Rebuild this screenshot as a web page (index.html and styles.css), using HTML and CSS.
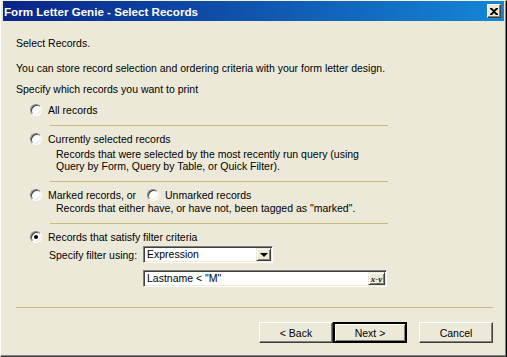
FILE: index.html
```html
<!DOCTYPE html>
<html lang="en">
<head>
  <meta charset="UTF-8" />
  <title>Form Letter Genie - Select Records</title>
  <link rel="stylesheet" href="styles.css">
</head>
<body>
  <div class="window">
    <div class="titlebar">
      <span class="title">Form Letter Genie - Select Records</span>
      <span class="close" title="Close">
        <svg width="8" height="7" viewBox="0 0 8 7"><path d="M0 0h2l2 2 2-2h2v1L5 3.5 8 6v1H6L4 5 2 7H0V6l3-2.5L0 1z" fill="#000"/></svg>
      </span>
    </div>

    <main class="content">
      <p class="line heading">Select Records.</p>
      <p class="line">You can store record selection and ordering criteria with your form letter design.</p>
      <p class="line">Specify which records you want to print</p>

      <div class="opt"><span class="radio"></span><span>All records</span></div>
      <div class="sep"></div>

      <div class="opt"><span class="radio"></span><span>Currently selected records</span></div>
      <p class="desc first">Records that were selected by the most recently run query (using<br>Query by Form, Query by Table, or Quick Filter).</p>
      <div class="sep"></div>

      <div class="opt">
        <span class="radio"></span><span class="pair-label">Marked records, or</span>
        <span class="radio"></span><span>Unmarked records</span>
      </div>
      <p class="desc">Records that either have, or have not, been tagged as "marked".</p>
      <div class="sep"></div>

      <div class="opt"><span class="radio on"></span><span>Records that satisfy filter criteria</span></div>
      <div class="filter-row">
        <span class="filter-label">Specify filter using:</span>
        <div class="select">
          <span class="value">Expression</span>
          <span class="arrow"><span class="tri"></span></span>
        </div>
      </div>
      <div class="field">
        <span class="value">Lastname &lt; "M"</span>
        <span class="xy">x-y</span>
      </div>
    </main>

    <footer class="footer">
      <div class="footer-sep"></div>
      <div class="buttons">
        <button class="btn">&lt; Back</button>
        <button class="btn default">Next &gt;</button>
        <button class="btn cancel">Cancel</button>
      </div>
    </footer>
  </div>
</body>
</html>
```

FILE: styles.css
```css
* {
  box-sizing: border-box;
}
body {
  margin: 0;
  background: #ece9d8;
  font-family: "Liberation Sans", Arial, sans-serif;
  font-size: 10.5px;
  color: #000;
}
.window {
  width: 507px;
  height: 357px;
  display: flex;
  flex-direction: column;
  background: #ece9d8;
  border-top: 1px solid #f4f2e8;
  border-left: 1px solid #fff;
  border-right: 1px solid #000;
  border-bottom: 1px solid #404040;
  box-shadow: inset -1px -1px #808080;
  padding: 0 2px;
}
.titlebar {
  height: 20px;
  display: flex;
  align-items: center;
  justify-content: space-between;
  padding: 0 3px 0 1px;
  background: linear-gradient(to right, #0a2487, #1486d6);
  color: #fff;
  font-weight: bold;
  font-size: 11.6px;
}
.close {
  width: 14px;
  height: 14px;
  display: flex;
  align-items: center;
  justify-content: center;
  background: #ece9d8;
  border: 1px solid;
  border-color: #fff #404040 #404040 #fff;
  box-shadow: inset -1px -1px #808080;
}
.content {
  padding: 16px 0 0 13px;
}
.line {
  margin: 0 0 9px;
  height: 12px;
  line-height: 12px;
}
.line.heading {
  margin-bottom: 13px;
}
.opt {
  display: flex;
  align-items: center;
  gap: 6px;
  height: 12px;
  line-height: 12px;
  margin-left: 14px;
}
.pair-label {
  width: 93px;
}
.radio {
  position: relative;
  flex: none;
  width: 12px;
  height: 12px;
  border-radius: 50%;
  background: #fff;
  border: 1px solid;
  border-color: #808080 #fff #fff #808080;
  box-shadow: inset 1px 1px #404040, inset -1px -1px #ece9d8;
}
.radio.on::after {
  content: "";
  position: absolute;
  left: 3px;
  top: 3px;
  width: 4px;
  height: 4px;
  border-radius: 50%;
  background: #000;
}
.desc {
  margin: 1px 0 0 40px;
  line-height: 12px;
}
.desc.first {
  margin-top: 3px;
}
.sep {
  width: 338px;
  height: 1px;
  margin: 9px 0 7px 34px;
  background: #c2bd7e;
}
.filter-row {
  display: flex;
  align-items: center;
  margin: 3px 0 0 33px;
}
.filter-label {
  width: 94px;
}
.select, .field {
  display: flex;
  height: 17px;
  background: #fff;
  border: 1px solid;
  border-color: #808080 #fff #fff #808080;
  box-shadow: inset 1px 1px #404040, inset -1px -1px #ece9d8;
  padding: 1px;
}
.select {
  width: 130px;
}
.field {
  width: 244px;
  margin: 7px 0 0 127px;
}
.value {
  flex: 1;
  padding-left: 2px;
  line-height: 13px;
}
.arrow, .xy {
  width: 15px;
  display: flex;
  align-items: center;
  justify-content: center;
  background: #ece9d8;
  border: 1px solid;
  border-color: #ece9d8 #404040 #404040 #ece9d8;
  box-shadow: inset 1px 1px #fff, inset -1px -1px #808080;
}
.tri {
  width: 0;
  height: 0;
  border-left: 4px solid transparent;
  border-right: 4px solid transparent;
  border-top: 4px solid #000;
}
.xy {
  width: 17px;
  font-family: "Liberation Serif", serif;
  font-weight: bold;
  font-style: italic;
  font-size: 9px;
  color: #222;
}
.footer {
  margin-top: auto;
}
.footer-sep {
  height: 1px;
  margin: 0 11px 0 13px;
  background: #c2bd7e;
}
.buttons {
  display: flex;
  justify-content: flex-end;
  margin: 14px 11px 13px 0;
}
.btn {
  width: 74px;
  height: 21px;
  padding: 0;
  background: #ece9d8;
  font-family: inherit;
  font-size: 10.5px;
  color: #000;
  border: 1px solid;
  border-color: #fff #404040 #404040 #fff;
  box-shadow: inset -1px -1px #808080;
}
.btn.default {
  border: 2px solid #000;
  box-shadow: inset 1px 1px #fff, inset -1px -1px #808080;
}
.btn.cancel {
  margin-left: 12px;
}
```
